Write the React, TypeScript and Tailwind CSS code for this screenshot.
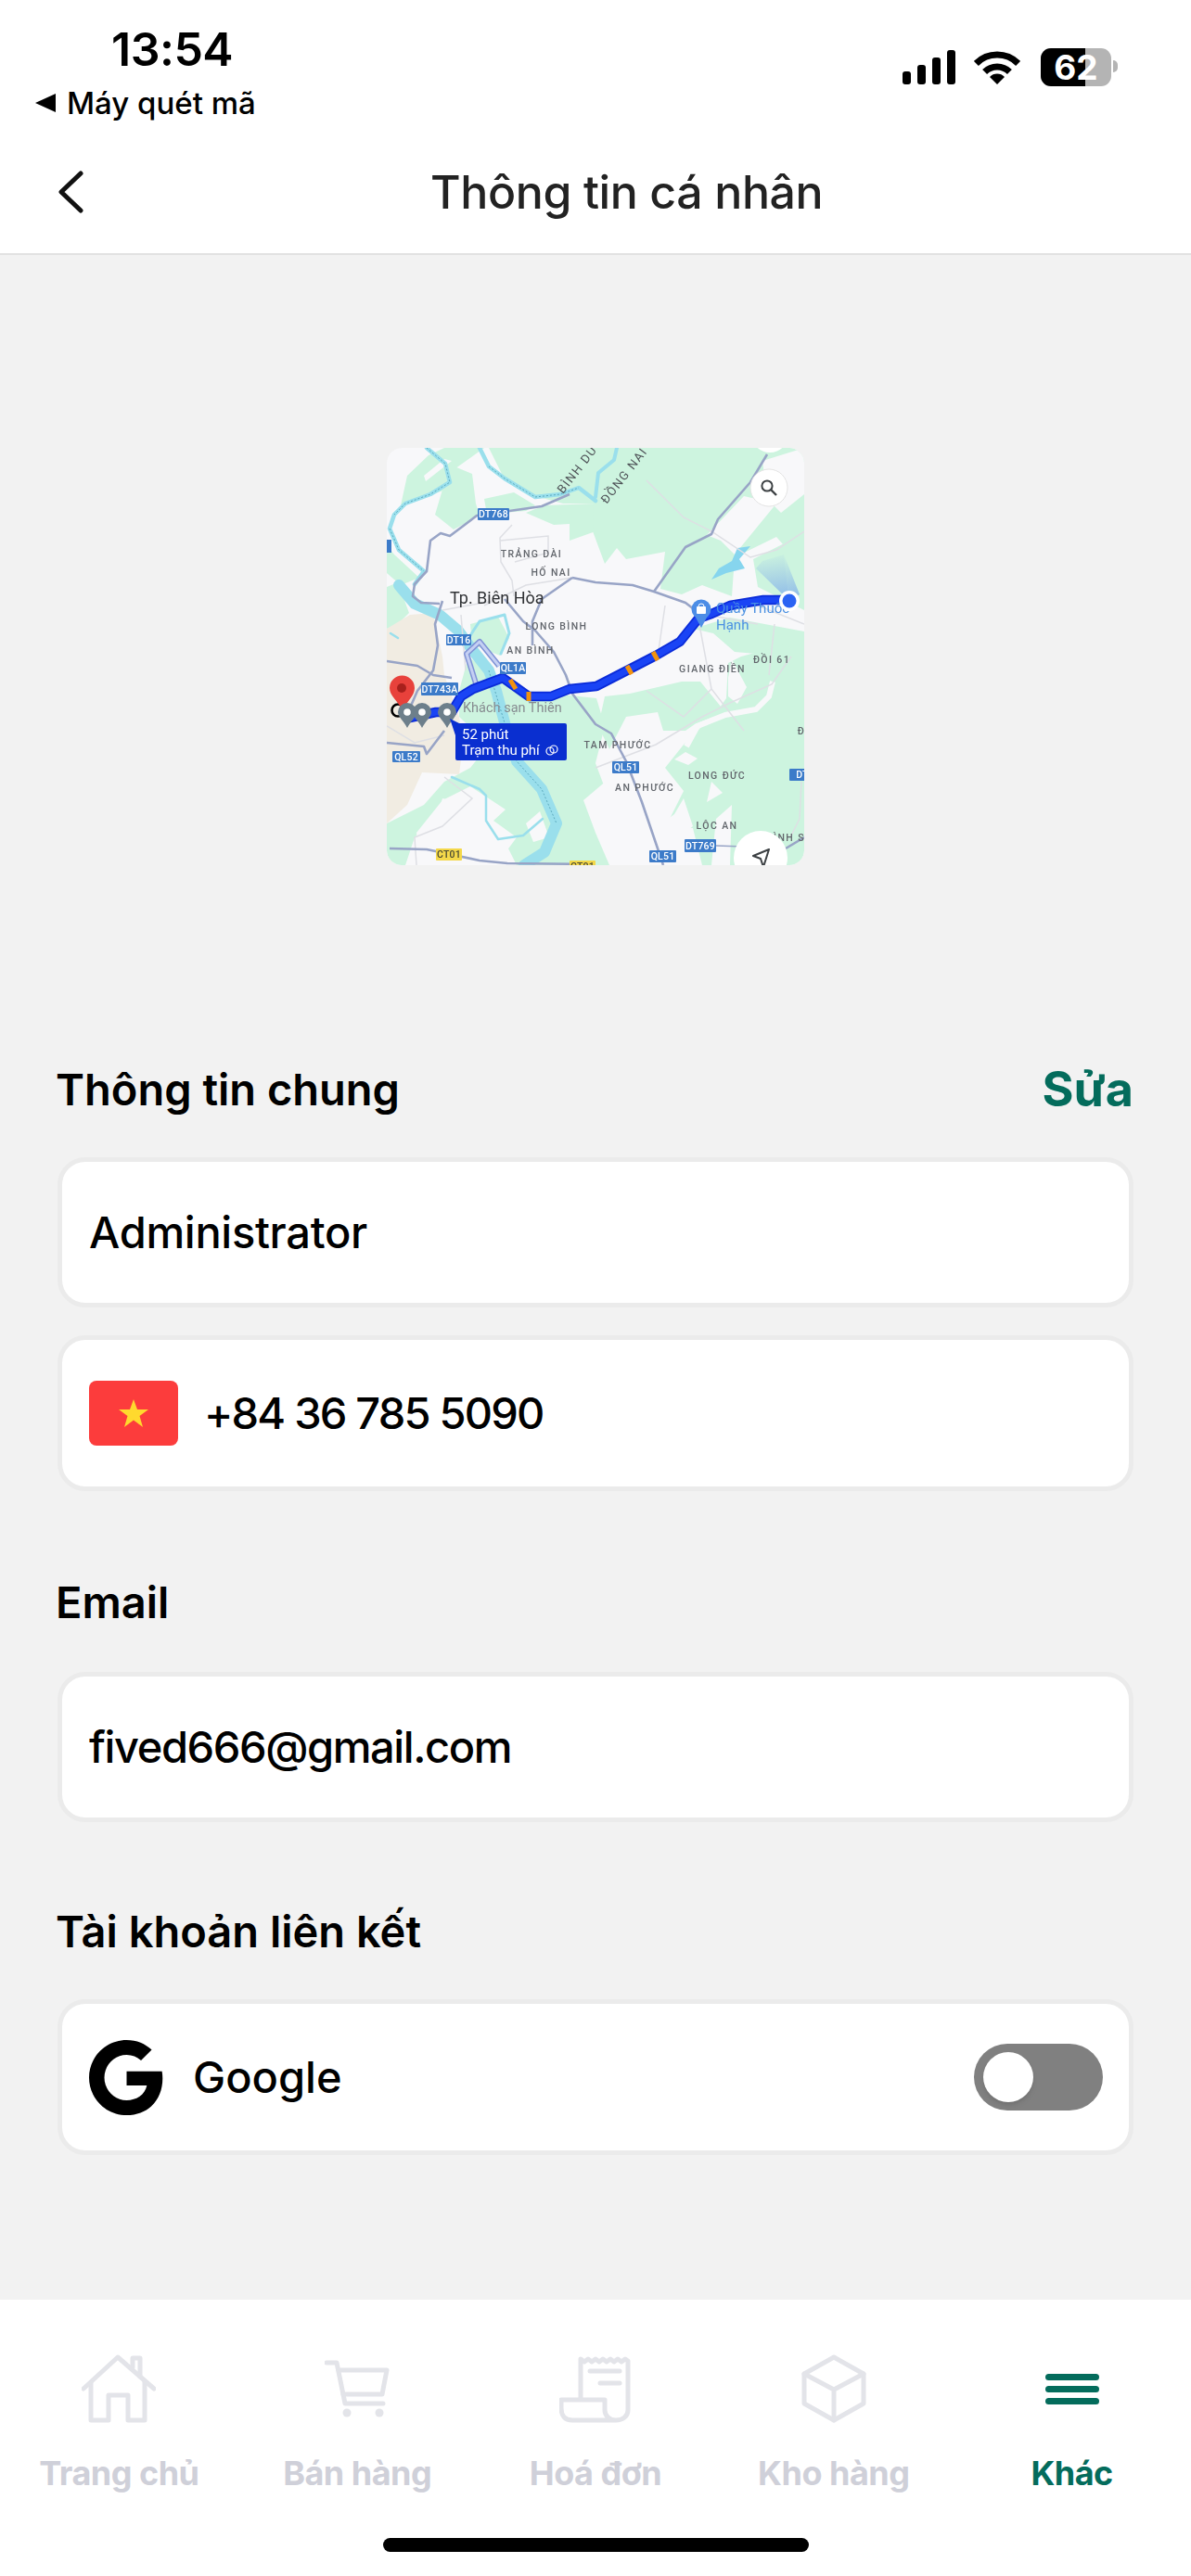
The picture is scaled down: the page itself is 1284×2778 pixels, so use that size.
import React from "react";

const font = { fontFamily: "Inter, 'Noto Sans', sans-serif" };

const Shield = ({ x, y, w, h, label, yellow }: { x: number; y: number; w: number; h: number; label: string; yellow?: boolean }) => (
  <g>
    <rect x={x} y={y} width={w} height={h} rx={1} fill={yellow ? "#f4d84a" : "#3c7bc9"} />
    <text
      x={x + w / 2}
      y={y + h / 2 + 3.8}
      textAnchor="middle"
      fontSize={10.5}
      fontWeight={500}
      letterSpacing={0.2}
      fill={yellow ? "#4a4a32" : "#ffffff"}
    >
      {label}
    </text>
  </g>
);

const Place = ({ x, y, label }: { x: number; y: number; label: string }) => (
  <text x={x} y={y} textAnchor="middle" fontSize={10.5} letterSpacing={1.4} fontWeight={500} fill="#62666c">
    {label}
  </text>
);

const Pin = ({ x, y }: { x: number; y: number }) => (
  <g>
    <path d={`M${x - 10} ${y} a10 10 0 0 1 20 0 c0 5 -6 9 -10 17 c-4 -8 -10 -12 -10 -17z`} fill="#6d7f8b" />
    <circle cx={x} cy={y} r={3.8} fill="#fff" />
  </g>
);

const routePath =
  "M20 292 L53 285 L70 285 L80 268 L93 260 L125 248 L153 268 L177 268 L197 260 L226 257 L261 239 L290 224 L316 209 L336 184 L350 179 L370 170 L406 164 L433 164";

const MapPreview = () => (
  <svg viewBox="0 0 450 450" className="h-[450px] w-[450px] rounded-[16px] blur-[0.5px]" style={{ fontFamily: "Roboto, sans-serif" }}>
    <defs>
      <linearGradient id="cone" x1="0.5" y1="1" x2="0.4" y2="0">
        <stop offset="0" stopColor="#5b8cf0" stopOpacity="0.55" />
        <stop offset="1" stopColor="#5b8cf0" stopOpacity="0.02" />
      </linearGradient>
      <clipPath id="mapclip">
        <rect width="450" height="450" rx="16" />
      </clipPath>
    </defs>
    <g clipPath="url(#mapclip)">
      <rect width="450" height="450" fill="#f8f8fa" />

      {/* forest */}
      <g fill="#cdf4df">
        <path d="M15 62 L22 30 L45 8 L62 0 L105 0 L70 25 L64 45 L38 54Z" />
        <path d="M52 72 L68 18 L92 28 L96 60 L100 73 L72 88Z" />
        <path d="M105 55 L137 48 L160 62 L150 68 L125 70 L108 72Z" />
        <path d="M110 0 L225 0 L225 60 L190 60 L160 52 L125 30Z" />
        <path d="M150 70 L180 83 L197 82 L197 100 L225 90 L225 60 L170 62Z" />
        <path d="M225 0 L450 0 L450 130 L420 96 L375 118 L372 160 L340 148 L318 158 L295 152 L300 112 L258 120 L248 108 L235 125 L222 90Z" />
        <path d="M395 120 L450 92 L450 175 L400 150Z" />
        <path d="M330 195 L370 183 L450 198 L450 450 L410 450 L340 450 L330 410 L300 410 L320 370 L300 345 L320 320 L345 295 L372 285 L398 270 L420 230 L435 215 L398 222 L375 220 L352 200Z" />
        <path d="M368 232 L382 225 L430 212 L450 225 L450 300 L345 300 L366 270Z" />
        <path d="M228 300 L235 268 L262 265 L318 252 L338 252 L365 285 L332 298 L322 305 L298 305 L292 285 L258 290 L240 325Z" />
        <path d="M0 150 L12 145 L24 178 L12 190 L0 195Z" />
        <path d="M0 105 L8 115 L35 140 L15 148 L0 135Z" />
        <path d="M88 225 L120 250 L150 262 L226 270 L235 300 L225 340 L240 380 L250 450 L140 450 L125 420 L100 388 L60 378 L55 395 L30 420 L20 450 L0 450 L0 405 L40 385 L62 360 L90 345 L110 320 L78 290 L78 262Z" />
        <path d="M90 190 L120 182 L132 205 L122 224 L92 212Z" />
      </g>
      <g fill="#f8f8fa">
        <path d="M70 14 L42 36 L40 30 L62 12Z" />
        <path d="M60 380 L90 365 L128 390 L115 402 L140 420 L118 450 L65 440 L35 435 L32 415Z" />
        <path d="M150 405 L165 392 L175 420 L158 425Z" />
        <path d="M212 380 L245 352 L262 375 L278 398 L275 450 L240 450 L225 415Z" />
        <path d="M310 336 L322 328 L335 335 L325 342Z" />
        <path d="M350 360 L362 372 L345 382Z" />
        <path d="M355 400 L372 385 L370 450 L350 450Z" />
        <path d="M310 395 L320 378 L330 408 L300 432 L290 410Z" />
        <path d="M368 248 L372 228 L388 258 L378 276 L368 268Z" />
        <path d="M345 94 L385 52 L420 60 L375 115 L360 100Z" />
        <path d="M405 14 L450 0 L450 50 L425 70 L410 55Z" />
      </g>
      <path d="M323 322 L335 300 L365 288 L398 282 L412 268 L416 252" fill="none" stroke="#f8f8fa" strokeWidth={6} />
      {/* built-up area */}
      <path d="M0 195 L25 180 L50 178 L60 225 L62 245 L78 290 L82 320 L78 352 L38 350 L22 385 L0 405Z" fill="#f1ece2" />

      {/* water */}
      <g fill="none" stroke="#9adfec" strokeLinejoin="round" strokeLinecap="round">
        <path d="M43 0 L63 17 L68 37 L47 50 L20 60 L8 72 L3 87 L13 110 L40 133 L30 147" strokeWidth={4.5} />
        <path d="M100 0 L110 20 L127 33 L160 53 L187 50 L207 43 L225 57" strokeWidth={4.5} />
        <path d="M248 0 L245 13 L228 27 L225 53" strokeWidth={4} />
        <path d="M13 148 L30 168 L57 180 L77 197 L90 215 L110 240 L118 262 L128 300 L140 338 L167 368 L183 405 L170 436 L148 450" strokeWidth={12} />
        <path d="M83 213 L100 187 L127 180 L132 200 L123 222" strokeWidth={3} />
        <path d="M70 355 L100 368 L107 375 L107 402 L120 422 L147 418 L168 400" strokeWidth={2.5} />
        <path d="M4 200 L12 205" strokeWidth={2.5} />
      </g>
      <path d="M3 87 L13 110 L40 133 M43 0 L63 17 L68 37 L47 50 L20 60 L8 72 M110 20 L127 33 L160 53 L187 50 L207 43 M110 240 L128 300 L140 338 L167 368 L183 405" fill="none" stroke="#5ca9bd" strokeWidth={1} strokeDasharray="2 2" />
      <path d="M358 130 L372 122 L378 108 L392 106 L380 120 L386 130 L366 135 L350 142 Z" fill="#86d5ee" />

      {/* minor roads */}
      <g fill="none" stroke="#dedfe4" strokeWidth={1.5}>
        <path d="M135 83 L122 97 L123 123 L135 143 L137 160 M122 100 L174 95 L174 113 L138 123" />
        <path d="M105 170 L150 148 L200 140" />
        <path d="M80 180 L85 240 M60 175 L115 165" />
        <path d="M280 35 L320 75 L350 90 L392 118 L420 110 L450 90" />
        <path d="M300 170 L292 225 M335 180 L350 260 L385 305" />
        <path d="M225 345 L290 320 L340 290 L370 275 L415 255 L436 225" />
        <path d="M280 262 L320 290 L350 260" />
        <path d="M400 170 L450 190 M345 180 L400 190 M418 190 L412 245" />
        <path d="M0 300 L30 318 L62 310 M62 355 L92 378 L60 408 L30 420 L32 450" />
        <path d="M447 360 L445 400 L435 420" />
      </g>

      {/* roads */}
      <g fill="none" stroke="#98a4c6" strokeWidth={2.6} strokeLinejoin="round">
        <path d="M197 50 L167 63 L132 68 L97 73 L68 95 L58 92 L47 100 L43 133 L30 147 L28 160 L37 167 L57 168" />
        <path d="M60 165 L52 190 L55 213 L50 240 L33 262 L23 285" />
        <path d="M200 140 L167 163 L157 187 L157 213" />
        <path d="M200 140 L225 145 L265 148 L288 155 L322 167 L335 177" />
        <path d="M127 163 L147 187 L160 197 L180 220 L193 245 L200 265 L225 298 L242 308 L258 338 L275 382 L292 432 L298 450" />
        <path d="M410 7 L392 37 L357 77 L350 93 L322 107 L288 155" />
        <path d="M0 230 L33 235 L50 245 L70 248" />
        <path d="M0 318 L40 322 L43 330 L62 305" />
        <path d="M3 432 L43 433 L100 445 L130 448 L225 449" />
        <path d="M430 432 L450 420" />
        <path d="M355 429 L385 430" strokeWidth={1.5} />
      </g>

      {/* alternative route */}
      <path d="M121 235 L100 209 L86 222 L96 254" fill="none" stroke="#7f92d6" strokeWidth={6} strokeLinejoin="round" />
      <path d="M121 235 L100 209 L86 222 L96 254" fill="none" stroke="#c5d0f3" strokeWidth={3} strokeLinejoin="round" />

      {/* main route */}
      <path d={routePath} fill="none" stroke="#0a2bd8" strokeWidth={10.5} strokeLinejoin="round" />
      <path d={routePath} fill="none" stroke="#1a44f5" strokeWidth={7} strokeLinejoin="round" />
      <g stroke="#f2920f" strokeWidth={5}>
        <path d="M133 250 L139 260" />
        <path d="M153 263 L153 273" />
        <path d="M259 235 L264 244" />
        <path d="M287 220 L292 229" />
      </g>

      {/* shields */}
      <Shield x={98} y={65} w={34} h={13} label="DT768" />
      <Shield x={64} y={201} w={27} h={12} label="DT16" />
      <Shield x={122} y={231} w={28} h={13} label="QL1A" />
      <Shield x={37} y={253} w={40} h={14} label="DT743A" />
      <Shield x={6} y={327} w={30} h={12} label="QL52" />
      <Shield x={53} y={432} w={28} h={13} label="CT01" yellow />
      <Shield x={197} y={445} w={28} h={13} label="CT01" yellow />
      <Shield x={243} y={338} w={29} h={13} label="QL51" />
      <Shield x={283} y={434} w={29} h={13} label="QL51" />
      <Shield x={321} y={422} w={34} h={14} label="DT769" />
      <Shield x={434} y={346} w={28} h={13} label="DT" />
      <rect x={-2} y={99} width={7} height={14} fill="#3c7bc9" />

      {/* names */}
      <Place x={156} y={118} label="TRẢNG DÀI" />
      <Place x={177} y={138} label="HỐ NAI" />
      <Place x={183} y={196} label="LONG BÌNH" />
      <Place x={155} y={222} label="AN BÌNH" />
      <Place x={249} y={324} label="TAM PHƯỚC" />
      <Place x={278} y={370} label="AN PHƯỚC" />
      <Place x={356} y={357} label="LONG ĐỨC" />
      <Place x={356} y={411} label="LỘC AN" />
      <Place x={351} y={242} label="GIANG ĐIỀN" />
      <Place x={415} y={232} label="ĐỒI 61" />
      <Place x={430} y={424} label="BÌNH S" />
      <Place x={447} y={309} label="Đ" />
      <text x={190} y={50} transform="rotate(-52 190 50)" fontSize={13} letterSpacing={1.5} fill="#4f5358">BÌNH DƯƠNG</text>
      <text x={237} y={61} transform="rotate(-52 237 61)" fontSize={13} letterSpacing={1.5} fill="#4f5358">ĐỒNG NAI</text>
      <text x={68} y={168} fontSize={18} fill="#2f3134">Tp. Biên Hòa</text>
      <text x={82} y={285} fontSize={14.5} fill="#868b90">Khách sạn Thiên</text>
      <text x={355} y={178} fontSize={15} fill="#4a90e2">Quầy Thuốc</text>
      <text x={355} y={196} fontSize={15} fill="#4a90e2">Hạnh</text>

      {/* shop pin */}
      <circle cx={339} cy={174} r={10.5} fill="#4c8de6" />
      <path d="M332 181 L339 194 L346 181Z" fill="#4c8de6" />
      <rect x={334} y={171} width={10} height={8} rx={1} fill="#fff" />
      <path d="M336 171 a3 3 0 0 1 6 0" fill="none" stroke="#fff" strokeWidth={1} />

      {/* my location */}
      <path d="M434 165 L398 130 L405 122 L428 115 Z" fill="url(#cone)" />
      <path d="M434 165 L428 115 L445 158 Z" fill="url(#cone)" />
      <circle cx={434} cy={165} r={11} fill="#fff" />
      <circle cx={434} cy={165} r={7.5} fill="#2b63f3" />

      {/* end of route */}
      <circle cx={12} cy={283} r={6.5} fill="none" stroke="#000" strokeWidth={2.6} />
      <path d="M17 284 C13 273 3 268 3 259 a13.5 13.5 0 0 1 27 0 C30 268 21 273 17 284Z" fill="#e8413b" />
      <circle cx={16} cy={259} r={5} fill="#a8201c" />
      <Pin x={22} y={285} />
      <Pin x={38} y={285} />
      <Pin x={65} y={285} />

      {/* toll callout */}
      <path d="M68 292 L80 298 L74 310Z" fill="#0a2fd0" />
      <rect x={74} y={297} width={120} height={40} rx={2} fill="#0a2fd0" />
      <text x={81} y={314} fontSize={15} fill="#fff">52 phút</text>
      <text x={81} y={331} fontSize={15} fill="#fff">Trạm thu phí</text>
      <circle cx={176} cy={327} r={4} fill="none" stroke="#fff" strokeWidth={1.2} />
      <circle cx={180} cy={325} r={4} fill="none" stroke="#fff" strokeWidth={1.2} />

      {/* map buttons */}
      <circle cx={413} cy={-15} r={20} fill="#fff" />
      <circle cx={412} cy={43} r={20} fill="#fff" stroke="#e3e3e3" strokeWidth={1} />
      <circle cx={410} cy={41} r={5.6} fill="none" stroke="#3c4043" strokeWidth={2} />
      <path d="M414 45 L420 51" stroke="#3c4043" strokeWidth={2.4} />
      <circle cx={403} cy={442} r={29} fill="#fff" />
      <path d="M412 433 L395 440 L403 443 L406 452Z" fill="none" stroke="#3c4043" strokeWidth={2} strokeLinejoin="round" />
    </g>
  </svg>
);

const Card = ({ children, className }: { children: React.ReactNode; className: string }) => (
  <div className={`ml-[2px] flex items-center rounded-[30px] border-[5px] border-[#ebebeb] bg-white pl-[29px] ${className}`}>
    {children}
  </div>
);

const HomeIcon = () => (
  <svg width="80" height="74" viewBox="0 0 80 74" fill="none" stroke="#e3e4e9" strokeWidth="5" strokeLinecap="round" strokeLinejoin="round">
    <path d="M2 37 L39 3 L78 37" />
    <path d="M10 31 V71 H29 V44 H50 V71 H68 V29" />
    <path d="M55 14 V4 H63 V24" />
  </svg>
);

const CartIcon = () => (
  <svg width="70" height="62" viewBox="0 0 70 62" fill="none" stroke="#e3e4e9" strokeWidth="5" strokeLinecap="round" strokeLinejoin="round">
    <path d="M2 3 H13 L22 47 H63" />
    <path d="M15 11 H67 L62 37 H20" />
    <circle cx="24" cy="57" r="4.5" fill="#e3e4e9" stroke="none" />
    <circle cx="59" cy="57" r="4.5" fill="#e3e4e9" stroke="none" />
  </svg>
);

const ReceiptIcon = () => (
  <svg width="77" height="74" viewBox="0 0 77 74" fill="none" stroke="#e3e4e9" strokeWidth="5" strokeLinecap="round" strokeLinejoin="round">
    <path d="M23 49 V5 L27 8 L31 5 L35 8 L39 5 L43 8 L47 5 L51 8 L55 5 L59 8 L63 5 L67 8 L71 5 L74 7 V60 C74 67 68 71 61 71 H14 C6 71 2 66 2 58 V49 H49 V60 C49 66 54 71 61 71" />
    <path d="M33 18 H65" />
    <path d="M44 31 H65" />
  </svg>
);

const BoxIcon = () => (
  <svg width="70" height="74" viewBox="0 0 70 74" fill="none" stroke="#e3e4e9" strokeWidth="5" strokeLinecap="round" strokeLinejoin="round">
    <path d="M35 3 L67 21 V53 L35 71 L3 53 V21Z" />
    <path d="M3 21 L35 38 L67 21 M35 38 V71" />
  </svg>
);

const MenuIcon = () => (
  <svg width="58" height="33" viewBox="0 0 58 33" fill="#046c5c">
    <rect width="58" height="7" rx="3.5" />
    <rect y="13" width="58" height="7" rx="3.5" />
    <rect y="26" width="58" height="7" rx="3.5" />
  </svg>
);

const tabs = [
  { label: "Trang chủ", icon: <HomeIcon /> },
  { label: "Bán hàng", icon: <CartIcon /> },
  { label: "Hoá đơn", icon: <ReceiptIcon /> },
  { label: "Kho hàng", icon: <BoxIcon /> },
  { label: "Khác", icon: <MenuIcon />, active: true },
];

const App = () => {
  return (
    <div className="flex h-[2778px] w-[1284px] flex-col bg-[#f2f2f2] text-black" style={font}>
      {/* header */}
      <div className="h-[275px] shrink-0 border-b-2 border-[#e2e2e2] bg-white">
        <div className="flex h-[150px] justify-between">
          <div>
            <div className="ml-[120px] mt-[24px] text-[50px] font-semibold leading-[58px] tracking-[-0.5px]">13:54</div>
            <div className="ml-[38px] mt-[9px] flex items-center gap-[12px] text-[33px] font-medium leading-[40px]">
              <span className="h-0 w-0 border-y-[10px] border-r-[22px] border-y-transparent border-r-black" />
              <span>Máy quét mã</span>
            </div>
          </div>
          <div className="mr-[79px] mt-[52px] flex h-[41px] items-start">
            <div className="mt-[2px] flex h-[37px] items-end gap-[7px]">
              <span className="h-[14px] w-[9px] rounded-[3px] bg-black" />
              <span className="h-[21px] w-[9px] rounded-[3px] bg-black" />
              <span className="h-[29px] w-[9px] rounded-[3px] bg-black" />
              <span className="h-[37px] w-[9px] rounded-[3px] bg-black" />
            </div>
            <svg className="ml-[20px] mt-[2px]" width="50" height="37" viewBox="0 0 50 37" fill="none" stroke="#000" strokeWidth="7">
              <path d="M2.4 14.4 A32 32 0 0 1 47.6 14.4" />
              <path d="M11.6 23.6 A19 19 0 0 1 38.4 23.6" />
              <path d="M25 37 L17 29 A11 11 0 0 1 33 29Z" fill="#000" stroke="none" />
            </svg>
            <div className="relative ml-[22px] flex h-[41px] w-[76px] overflow-hidden rounded-[11px] bg-[#b4b4b4]">
              <span className="h-full w-[48px] bg-black" />
              <span className="absolute inset-0 flex items-center justify-center text-[37px] font-bold leading-none text-white">62</span>
            </div>
            <span className="ml-[2px] mt-[13px] h-[13px] w-[5px] rounded-r-full bg-[#b4b4b4]" />
          </div>
        </div>
        <div className="flex h-[114px] items-center">
          <svg className="ml-[62px]" width="28" height="46" viewBox="0 0 28 46" fill="none" stroke="#111" strokeWidth="5" strokeLinecap="round" strokeLinejoin="round">
            <path d="M25 3 L4 23 L25 43" />
          </svg>
          <h1 className="ml-[374px] text-[50px] font-medium leading-none tracking-[-0.4px] text-[#222]">Thông tin cá nhân</h1>
        </div>
      </div>

      {/* body */}
      <div className="flex flex-1 flex-col pl-[60px] pr-[62px]">
        <div className="ml-[357px] mt-[208px] w-[450px]">
          <MapPreview />
        </div>

        <div className="mt-[218px] flex items-center justify-between">
          <h2 className="text-[47px] font-semibold leading-[48px]">Thông tin chung</h2>
          <span className="text-[52px] font-bold leading-[48px] text-[#046c5c]">Sửa</span>
        </div>
        <Card className="mt-[49px] h-[162px]">
          <span className="text-[47px] font-medium tracking-[-0.3px]">Administrator</span>
        </Card>
        <Card className="mt-[30px] h-[168px]">
          <span className="flex h-[70px] w-[96px] items-center justify-center rounded-[8px] bg-[#fc3c3c]">
            <svg width="32" height="30" viewBox="0 0 32 30" fill="#ffd92e">
              <path d="M16 0 L20 11 L32 11 L22.5 18 L26 30 L16 22.5 L6 30 L9.5 18 L0 11 L12 11Z" />
            </svg>
          </span>
          <span className="ml-[28px] text-[47px] font-medium tracking-[-1.8px]">+84 36 785 5090</span>
        </Card>

        <h2 className="mt-[96px] text-[47px] font-semibold leading-[48px]">Email</h2>
        <Card className="mt-[51px] h-[162px]">
          <span className="text-[47px] font-medium tracking-[-1.4px]">fived666@gmail.com</span>
        </Card>

        <h2 className="mt-[94px] text-[47px] font-semibold leading-[48px]">Tài khoản liên kết</h2>
        <Card className="mt-[49px] h-[168px] pr-[28px]">
          <svg width="81" height="83" viewBox="0 0 24 24" fill="#000">
            <path d="M23.49 12.27c0-.79-.07-1.54-.19-2.27H12v4.51h6.47c-.29 1.48-1.14 2.73-2.4 3.58v3h3.86c2.26-2.09 3.56-5.17 3.56-8.82z" />
            <path d="M12 24c3.24 0 5.95-1.08 7.93-2.91l-3.86-3c-1.08.72-2.45 1.16-4.07 1.16-3.13 0-5.78-2.11-6.73-4.96H1.29v3.09C3.26 21.3 7.31 24 12 24z" />
            <path d="M5.27 14.29c-.25-.72-.38-1.49-.38-2.29s.14-1.57.38-2.29V6.62H1.29C.47 8.24 0 10.06 0 12s.47 3.76 1.29 5.38l3.98-3.09z" />
            <path d="M12 4.75c1.77 0 3.35.61 4.6 1.8l3.42-3.42C17.95 1.19 15.24 0 12 0 7.31 0 3.26 2.7 1.29 6.62l3.98 3.09c.95-2.85 3.6-4.96 6.73-4.96z" />
          </svg>
          <span className="ml-[31px] text-[47px] font-medium">Google</span>
          <div className="ml-auto flex h-[72px] w-[139px] items-center rounded-full bg-[#808080] pl-[10px]">
            <span className="h-[54px] w-[54px] rounded-full bg-white shadow-md" />
          </div>
        </Card>
      </div>

      {/* tab bar */}
      <div className="h-[298px] shrink-0 bg-white">
        <div className="grid grid-cols-5 pt-[59px]">
          {tabs.map((tab) => (
            <div key={tab.label} className="flex flex-col items-center">
              <div className="flex h-[74px] items-center">{tab.icon}</div>
              <span className={`mt-[32px] text-[36px] font-bold leading-[44px] tracking-[-0.5px] ${tab.active ? "text-[#046c5c]" : "text-[#cfd0d9]"}`}>
                {tab.label}
              </span>
            </div>
          ))}
        </div>
        <div className="mx-auto mt-[48px] h-[15px] w-[459px] rounded-full bg-black" />
      </div>
    </div>
  );
};

export default App;
